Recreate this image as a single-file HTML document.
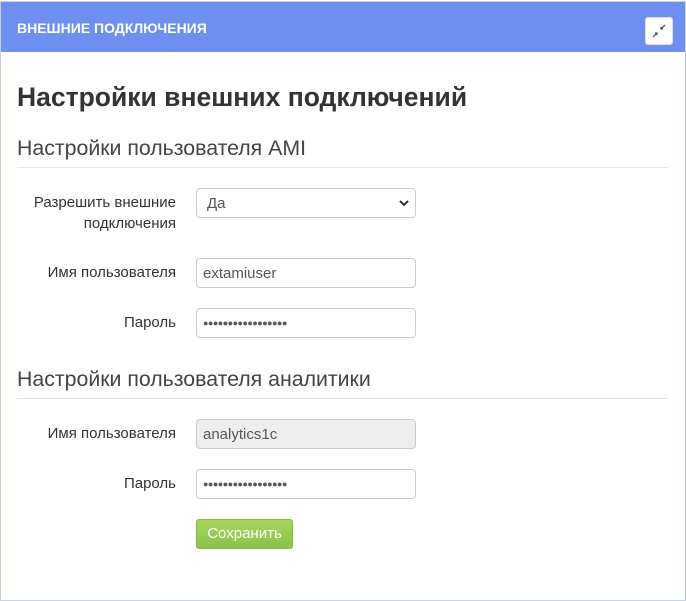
<!DOCTYPE html>
<html><head><meta charset="utf-8"><style>
body{margin:0;width:686px;height:601px;background:#fff;font-family:"Liberation Sans",sans-serif;position:relative;overflow:hidden}
.box{position:absolute;left:0;top:1px;width:684px;height:598px;border:1px solid #c9d0e6;}
.hdr{position:absolute;left:1px;top:2px;width:684px;height:50px;background:#6d8fef;}
.hdr span{position:absolute;left:16px;top:18px;color:#fff;font-weight:bold;font-size:14px;}
.btn{position:absolute;left:644px;top:15px;width:26px;height:26px;background:#fff;border-radius:3px;border:1px solid #dde}
h1{position:absolute;left:17px;top:82px;margin:0;font-size:26.5px;font-weight:bold;color:#333}
.h2{position:absolute;left:17px;margin:0;font-size:21.3px;color:#444;}
.hr{position:absolute;left:17px;width:651px;height:1px;background:#e5e5e5}
.lbl{position:absolute;right:510px;font-size:15px;color:#333;text-align:right;line-height:21px}
.in{position:absolute;left:196px;width:212px;height:28px;border:1px solid #ccc;border-radius:4px;padding-left:6px;font-size:15px;line-height:30px;color:#555;background:#fff}
.dots{font-size:9px;letter-spacing:-0.5px;color:#555;line-height:28px}
.save{position:absolute;left:196px;top:519px;width:97px;height:30px;border-radius:3px;background:linear-gradient(#a7d65d,#8bc34a);border:1px solid #85b845;box-sizing:border-box;color:#fff;font-size:15px;text-align:center;line-height:28px}
</style></head><body>
<div class="box"></div>
<div class="hdr"><span>ВНЕШНИЕ ПОДКЛЮЧЕНИЯ</span>
<div class="btn"><svg width="26" height="26" viewBox="0 0 26 26"><path d="M7 19L11 15M9 15h2v2M19 7L15 11M15 9v2h2" stroke="#555" stroke-width="1.3" fill="none"/></svg></div></div>
<h1>Настройки внешних подключений</h1>
<div class="h2" style="top:136px">Настройки пользователя AMI</div>
<div class="hr" style="top:167px"></div>
<div class="lbl" style="top:192px">Разрешить внешние<br>подключения</div>
<div class="in" style="top:188px;padding-left:10px;width:208px">Да<svg style="position:absolute;right:6px;top:11px" width="10" height="7" viewBox="0 0 10 7"><path d="M1 1l4 4 4-4" stroke="#333" stroke-width="2" fill="none"/></svg></div>
<div class="lbl" style="top:262px">Имя пользователя</div>
<div class="in" style="top:258px">extamiuser</div>
<div class="lbl" style="top:312px">Пароль</div>
<div class="in dots" style="top:308px">●●●●●●●●●●●●●●●●●</div>
<div class="h2" style="top:367px">Настройки пользователя аналитики</div>
<div class="hr" style="top:398px"></div>
<div class="lbl" style="top:423px">Имя пользователя</div>
<div class="in" style="top:419px;background:#eee">analytics1c</div>
<div class="lbl" style="top:473px">Пароль</div>
<div class="in dots" style="top:469px">●●●●●●●●●●●●●●●●●</div>
<div class="save">Сохранить</div>
</body></html>
